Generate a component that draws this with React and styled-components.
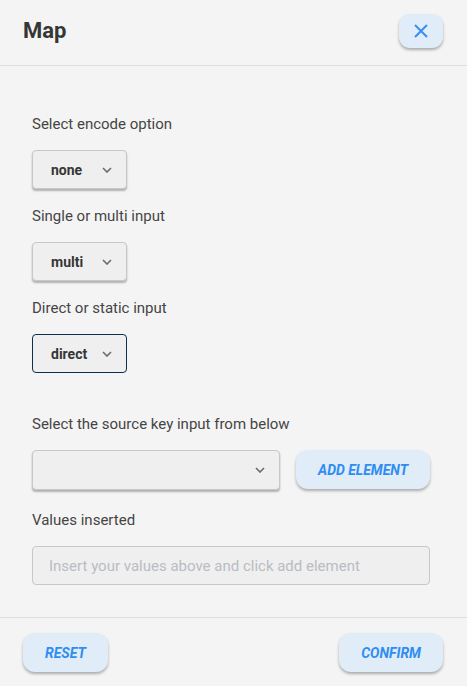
import React from "react";
import styled, { createGlobalStyle } from "styled-components";

const GlobalStyle = createGlobalStyle`
  html, body {
    margin: 0;
    padding: 0;
    background: #f4f4f4;
  }
  body {
    font-family: Roboto, "Liberation Sans", Arial, sans-serif;
    color: #444;
  }
  * {
    box-sizing: border-box;
  }
`;

const Modal = styled.div`
  width: 467px;
  height: 686px;
  display: flex;
  flex-direction: column;
  background: #f4f4f4;
`;

const Header = styled.header`
  height: 66px;
  padding: 0 24px 4px 23px;
  display: flex;
  align-items: center;
  justify-content: space-between;
  border-bottom: 1px solid #dedede;
`;

const Title = styled.h2`
  margin: 0;
  font-size: 22px;
  font-weight: 700;
  color: #363636;
`;

const IconButton = styled.button`
  width: 44px;
  height: 34px;
  border: none;
  border-radius: 11px;
  background: #e0edf8;
  box-shadow: 0 2px 3px rgba(0, 0, 0, 0.3);
  display: flex;
  align-items: center;
  justify-content: center;
  padding: 0;
  cursor: pointer;
`;

const Body = styled.div`
  flex: 1;
  padding: 49px 36px 0 32px;
  display: flex;
  flex-direction: column;
`;

const Label = styled.div`
  font-size: 15px;
  line-height: 18px;
  color: #454545;
  margin-bottom: 17px;
`;

const Select = styled.div`
  width: ${({ $wide }) => ($wide ? "248px" : "95px")};
  height: ${({ $wide }) => ($wide ? "40px" : "39px")};
  flex-shrink: 0;
  display: flex;
  align-items: center;
  justify-content: space-between;
  padding: 0 14px 0 18px;
  border-radius: 4px;
  background: #efefef;
  border: 1px solid ${({ $focused }) => ($focused ? "#0d2f4f" : "#c8c8c8")};
  box-shadow: ${({ $focused }) =>
    $focused ? "none" : "0 2px 2px rgba(0, 0, 0, 0.28)"};
  margin-bottom: ${({ $gap }) => $gap || 18}px;
  font-size: 14px;
  font-weight: 700;
  color: #363636;
  cursor: pointer;
`;

const Row = styled.div`
  display: flex;
  align-items: flex-start;
  gap: 16px;
`;

const PillButton = styled.button`
  height: 39px;
  flex-shrink: 0;
  padding: 0 22px;
  border: none;
  border-radius: 12px;
  background: #e0edf8;
  box-shadow: 0 2px 3px rgba(0, 0, 0, 0.3);
  font-family: Roboto, "Liberation Sans", Arial, sans-serif;
  font-size: 14px;
  font-weight: 700;
  font-style: italic;
  white-space: nowrap;
  color: #2f8cf3;
  cursor: pointer;
`;

const Input = styled.input`
  width: 398px;
  height: 39px;
  padding: 0 16px;
  border: 1px solid #c8c8c8;
  border-radius: 4px;
  background: #efefef;
  font-family: Roboto, "Liberation Sans", Arial, sans-serif;
  font-size: 15px;
  color: #333;
  outline: none;
  &::placeholder {
    color: #b9bcc3;
  }
`;

const Footer = styled.footer`
  height: 69px;
  border-top: 1px solid #dedede;
  padding: 15px 24px 0 23px;
  display: flex;
  justify-content: space-between;
  align-items: flex-start;
`;

const Chevron = () => (
  <svg width="10" height="6" viewBox="0 0 10 6" fill="none">
    <path d="M1 1l4 4 4-4" stroke="#6b6b6b" strokeWidth="1.6" />
  </svg>
);

const CloseIcon = () => (
  <svg width="16" height="16" viewBox="0 0 16 16" fill="none">
    <path d="M2 2l12 12M14 2L2 14" stroke="#3a8ef2" strokeWidth="2" />
  </svg>
);

export default function App() {
  return (
    <Modal>
      <GlobalStyle />
      <Header>
        <Title>Map</Title>
        <IconButton aria-label="close">
          <CloseIcon />
        </IconButton>
      </Header>
      <Body>
        <Label>Select encode option</Label>
        <Select>
          none
          <Chevron />
        </Select>
        <Label>Single or multi input</Label>
        <Select>
          multi
          <Chevron />
        </Select>
        <Label>Direct or static input</Label>
        <Select $focused $gap={42}>
          direct
          <Chevron />
        </Select>
        <Label>Select the source key input from below</Label>
        <Row>
          <Select $wide $gap={21}>
            <span />
            <Chevron />
          </Select>
          <PillButton>ADD ELEMENT</PillButton>
        </Row>
        <Label>Values inserted</Label>
        <Input placeholder="Insert your values above and click add element" />
      </Body>
      <Footer>
        <PillButton>RESET</PillButton>
        <PillButton>CONFIRM</PillButton>
      </Footer>
    </Modal>
  );
}
